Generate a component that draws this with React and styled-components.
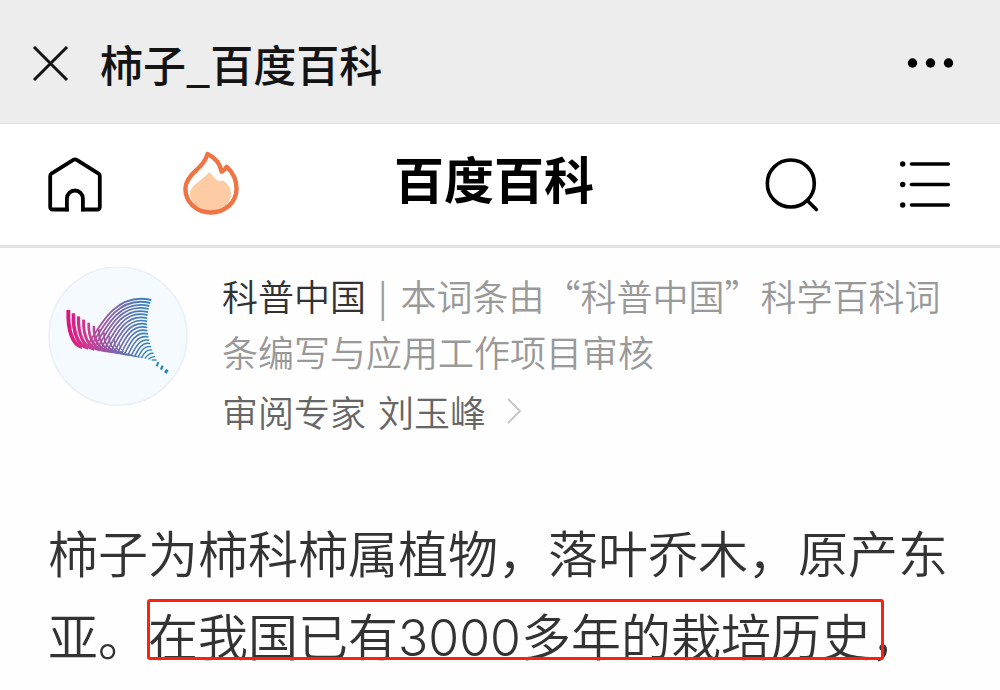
import React from 'react'
import styled, { createGlobalStyle } from 'styled-components'

const fontFamily = '"Noto Sans CJK SC", "Noto Sans", sans-serif'

const GlobalStyle = createGlobalStyle`
    * {
        box-sizing: border-box;
    }

    body {
        margin: 0;
        background: #fefefe;
        color: #333333;
        font-family: ${fontFamily};
    }

    h1, p {
        margin: 0;
    }
`

const TopBar = styled.header`
    display: flex;
    align-items: center;
    height: 124px;
    padding: 3px 46px 0 32px;
    background: #ededed;
    border-bottom: 1px solid #e0e0e0;
`

const PageTitle = styled.p`
    flex: 1;
    margin-left: 31px;
    color: #141414;
    font-size: 43px;
    font-weight: 500;
    line-height: 64px;
    white-space: nowrap;
`

const IconButton = styled.button`
    display: flex;
    padding: 0;
    border: 0;
    background: none;
    color: #000000;
    cursor: pointer;
`

const Nav = styled.nav`
    display: grid;
    grid-template-columns: 1fr auto 1fr;
    align-items: center;
    height: 124px;
    padding: 0 48px;
    background: #ffffff;
    border-bottom: 3px solid #e3e3e3;
`

const NavGroup = styled.div`
    display: flex;
    align-items: center;
    justify-content: ${({ $end }) => ($end ? 'flex-end' : 'flex-start')};
    gap: 81px;
`

const Brand = styled.h1`
    padding: 0 12px 16px 0;
    color: #000000;
    font-size: 50px;
    font-weight: 700;
    line-height: 64px;
`

const Main = styled.main`
    padding: 19px 48px;
`

const Review = styled.section`
    display: flex;
    align-items: flex-start;
    gap: 34px;
`

const Avatar = styled.svg`
    flex: none;
    width: 140px;
    height: 140px;
`

const ReviewText = styled.div`
    color: #999999;
    font-size: 36px;
    font-weight: 350;
    line-height: 56px;
`

const Source = styled.span`
    color: #333333;
`

const Divider = styled.span`
    margin: 0 13px 0 12px;
`

const Expert = styled.a`
    display: flex;
    align-items: center;
    gap: 12px;
    margin-top: 4px;
    color: #666666;
    text-decoration: none;

    svg {
        margin-left: 8px;
    }
`

const Summary = styled.p`
    margin-top: 71px;
    font-size: 50px;
    font-weight: 350;
    line-height: 83px;
`

const Highlight = styled.span`
    display: inline-block;
    position: relative;

    &::after {
        content: '';
        position: absolute;
        top: 6px;
        right: -13px;
        bottom: 16px;
        left: -1px;
        border: 3px solid #fb2010;
        border-radius: 3px;
    }
`

const Digits = styled.span`
    font-family: Inter, ${fontFamily};
    font-weight: 300;
    line-height: 1;
`

function CloseIcon() {
    return (
        <svg width="37" height="37" viewBox="0 0 37 37" fill="none" stroke="#111111" strokeWidth="3" aria-hidden="true">
            <path d="M2 2l33 33M35 2L2 35" />
        </svg>
    )
}

function MoreIcon() {
    return (
        <svg width="48" height="12" viewBox="0 0 48 12" aria-hidden="true">
            <circle cx="6.5" cy="6" r="4.7" />
            <circle cx="24.5" cy="6" r="4.7" />
            <circle cx="42.5" cy="6" r="4.7" />
        </svg>
    )
}

function HomeIcon() {
    return (
        <svg width="54" height="56" viewBox="0 0 54 56" fill="none" stroke="currentColor" strokeWidth="3.8" strokeLinejoin="round" aria-hidden="true">
            <path d="M18.9 54.3V41.500a8 8 0 0 1 16 0v12.8" />
            <path d="M20.8 52.500H4.5a2.3 2.3 0 0 1-2.3-2.3V19c0-1 .4-1.8 1.2-2.3L25.3 2.9a3 3 0 0 1 3.4 0L50.6 16.7c.8.5 1.2 1.3 1.2 2.3v31.2a2.3 2.3 0 0 1-2.3 2.3H33" />
        </svg>
    )
}

function HotIcon() {
    return (
        <svg width="56" height="68" viewBox="0 0 56 68" fill="none" aria-hidden="true">
            <path d="M26 21c-2 3-5 5.5-9 8.5-6 4.5-9.5 8-10 12.5C7 52 16 59.5 28 59.5S48 52 48 43c0-5-3-10.5-7.7-13.5-2.3 1-4.6.8-6.6-.5-2.4-2-4.2-5-7.7-8Z" fill="#fdcba4" />
            <path d="M24.5 3C23 8.5 20 13 14 18.5 6 25.5 2.4 31 2.4 37.5c0 13.8 11 24 25.4 24s25.7-10.2 25.7-24c0-9-4-16.500-9.8-21.700-1 1.900-2.700 3.400-5 4.900C37 12.5 32 6.5 24.5 3Z" stroke="#f07344" strokeWidth="4.4" strokeLinejoin="round" />
        </svg>
    )
}

function SearchIcon() {
    return (
        <svg width="54" height="54" viewBox="0 0 54 54" fill="none" stroke="currentColor" strokeWidth="3.6" strokeLinecap="round" aria-hidden="true">
            <circle cx="25.8" cy="25.500" r="23.5" />
            <path d="M42.800 43l8.500 8.500" />
        </svg>
    )
}

function MenuIcon() {
    return (
        <svg width="52" height="48" viewBox="0 0 52 48" aria-hidden="true">
            {[3, 23.5, 44].map((y) => (
                <g key={y}>
                    <circle cx="2.7" cy={y} r="2.7" />
                    <path d={`M11.5 ${y}H48.3`} stroke="currentColor" strokeWidth="3.6" strokeLinecap="round" />
                </g>
            ))}
        </svg>
    )
}

const mix = (a, b, t) => a + (b - a) * t

// left wing: short arcs that get thinner towards the middle
const leftLines = Array.from({ length: 11 }, (_, i) => {
    const t = i / 10
    const x = mix(85, 238, t)
    const y = mix(150, 246, t)
    const endX = mix(126, 310, t)
    const endY = mix(261, 292, t)
    return {
        d: `M${x} ${y}C${x - 2} ${mix(y, endY, 0.55)} ${mix(x, endX, 0.3)} ${mix(y, endY, 0.95)} ${endX} ${endY}`,
        width: mix(11.5, 2.5, t),
    }
})

// right wing: long arcs that end on the concave right edge
const rightLines = Array.from({ length: 20 }, (_, i) => {
    const t = i / 19
    const x = mix(140, 335, t)
    const y = mix(262, 300, t)
    const endX = (1 - t) * (1 - t) * 334 + 2 * t * (1 - t) * 302 + t * t * 350
    const endY = (1 - t) * (1 - t) * 120 + 2 * t * (1 - t) * 205 + t * t * 300
    return {
        d: `M${x} ${y}C${mix(x, endX, 0.25)} ${mix(y, endY, 0.6)} ${mix(x, endX, 0.5)} ${mix(y, endY, 1.16)} ${endX} ${endY}`,
        width: mix(5.6, 4, t),
    }
})

function ScienceLogo() {
    return (
        <Avatar viewBox="24 21 420 420" role="img" aria-label="科普中国">
            <defs>
                <linearGradient id="wing" gradientUnits="userSpaceOnUse" x1="80" y1="0" x2="385" y2="0">
                    <stop offset="0" stopColor="#e0107c" />
                    <stop offset="0.2" stopColor="#cf3a91" />
                    <stop offset="0.45" stopColor="#8361a8" />
                    <stop offset="0.75" stopColor="#3f80bd" />
                    <stop offset="1" stopColor="#1689bd" />
                </linearGradient>
            </defs>
            <circle cx="234" cy="228" r="207" fill="#f5faff" stroke="#ebeffa" strokeWidth="5" />
            <g fill="none" stroke="url(#wing)">
                {leftLines.map((line) => (
                    <path key={line.d} d={line.d} strokeWidth={line.width} />
                ))}
                {rightLines.map((line) => (
                    <path key={line.d} d={line.d} strokeWidth={line.width} />
                ))}
                <path d="M350 319l5-13" strokeWidth="6" />
                <path d="M363 329l5-12" strokeWidth="7" />
                <path d="M376 339l6-10" strokeWidth="9" />
            </g>
        </Avatar>
    )
}

function App() {
    return (
        <>
            <GlobalStyle />
            <TopBar>
                <IconButton type="button" aria-label="关闭"><CloseIcon /></IconButton>
                <PageTitle>柿子_百度百科</PageTitle>
                <IconButton type="button" aria-label="更多"><MoreIcon /></IconButton>
            </TopBar>
            <Nav>
                <NavGroup>
                    <IconButton type="button" aria-label="首页"><HomeIcon /></IconButton>
                    <IconButton type="button" aria-label="热门"><HotIcon /></IconButton>
                </NavGroup>
                <Brand>百度百科</Brand>
                <NavGroup $end>
                    <IconButton type="button" aria-label="搜索"><SearchIcon /></IconButton>
                    <IconButton type="button" aria-label="目录"><MenuIcon /></IconButton>
                </NavGroup>
            </Nav>
            <Main>
                <Review>
                    <ScienceLogo />
                    <ReviewText>
                        <p>
                            <Source>科普中国</Source>
                            <Divider>|</Divider>
                            本词条由“科普中国”科学百科词条编写与应用工作项目审核
                        </p>
                        <Expert href="#expert">
                            <span>审阅专家</span>
                            <span>刘玉峰</span>
                            <svg width="16" height="28" viewBox="0 0 16 28" fill="none" stroke="#c8c8c8" strokeWidth="2" aria-hidden="true">
                                <path d="M2 2l12 12L2 26" />
                            </svg>
                        </Expert>
                    </ReviewText>
                </Review>
                <Summary>
                    柿子为柿科柿属植物，落叶乔木，原产东亚。<Highlight>在我国已有<Digits>3000</Digits>多年的栽培历史</Highlight>，
                </Summary>
            </Main>
        </>
    )
}

export default App
